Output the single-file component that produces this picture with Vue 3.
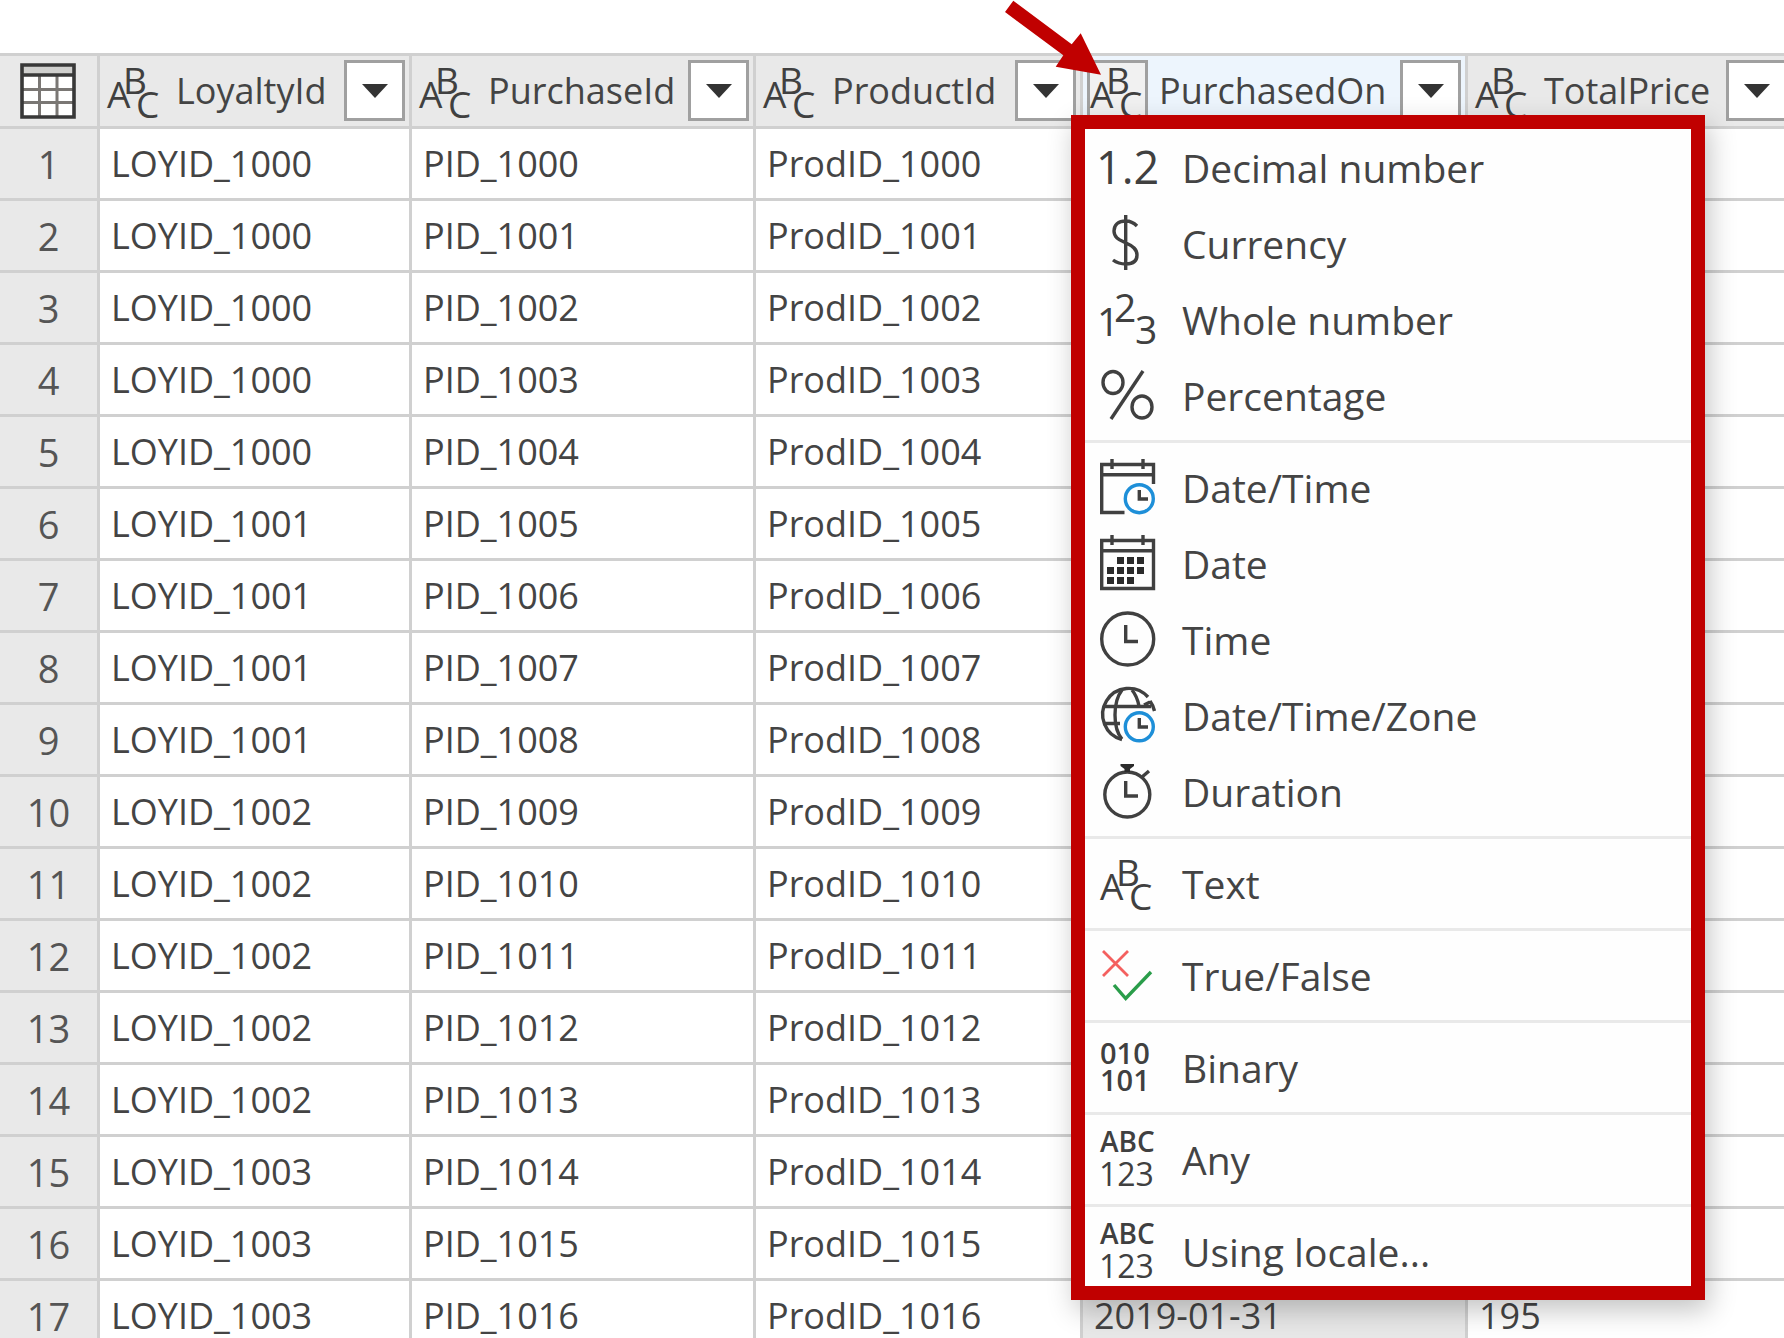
<script setup>
const columns = [
  { key: 'loyalty', label: 'LoyaltyId' },
  { key: 'purchase', label: 'PurchaseId' },
  { key: 'product', label: 'ProductId' },
  { key: 'date', label: 'PurchasedOn', selected: true },
  { key: 'price', label: 'TotalPrice' },
]

const loyaltyIds = [1000, 1000, 1000, 1000, 1000, 1001, 1001, 1001, 1001, 1002, 1002, 1002, 1002, 1002, 1003, 1003, 1003]

const rows = loyaltyIds.map((id, i) => ({
  loyalty: `LOYID_${id}`,
  purchase: `PID_${1000 + i}`,
  product: `ProdID_${1000 + i}`,
  date: i === 16 ? '2019-01-31' : '',
  price: i === 16 ? '195' : '',
}))

const groups = [
  [
    { icon: 'decimal', label: 'Decimal number' },
    { icon: 'currency', label: 'Currency' },
    { icon: 'whole', label: 'Whole number' },
    { icon: 'percent', label: 'Percentage' },
  ],
  [
    { icon: 'datetime', label: 'Date/Time' },
    { icon: 'date', label: 'Date' },
    { icon: 'time', label: 'Time' },
    { icon: 'zone', label: 'Date/Time/Zone' },
    { icon: 'duration', label: 'Duration' },
  ],
  [{ icon: 'text', label: 'Text' }],
  [{ icon: 'bool', label: 'True/False' }],
  [{ icon: 'binary', label: 'Binary' }],
  [{ icon: 'any', label: 'Any' }],
  [{ icon: 'any', label: 'Using locale...' }],
]

const dots = [[20, 25], [30, 25], [40, 25], [10, 35], [20, 35], [30, 35], [40, 35], [10, 45], [20, 45], [30, 45]]
</script>

<template>
  <main class="viewport">
    <table class="grid">
      <colgroup>
        <col class="c-num"><col class="c-loyalty"><col class="c-purchase"><col class="c-product"><col class="c-date"><col>
      </colgroup>
      <thead>
        <tr>
          <th class="corner">
            <button class="plain" aria-label="Table options">
              <svg class="icon" viewBox="0 0 56 56">
                <rect x="2" y="2" width="52" height="52" fill="#fff" />
                <rect x="2" y="2" width="52" height="10" fill="#d0d0ce" />
                <path d="M19.500 12V54M37 12V54M2 26.500H54M2 39.500H54" stroke="#7a7774" stroke-width="3" fill="none" />
                <path d="M2 2H54V54H2ZM2 12H54" stroke="#383838" stroke-width="3.600" fill="none" />
              </svg>
            </button>
          </th>
          <th v-for="c in columns" :key="c.key" :class="{ selected: c.selected }">
            <div class="head">
              <button class="type" :aria-label="'Data type of ' + c.label">
                <svg class="icon" viewBox="0 0 56 56">
                  <text x="0" y="45" font-size="37">A</text>
                  <text x="16" y="31" font-size="37">B</text>
                  <text x="29" y="55" font-size="37">C</text>
                </svg>
              </button>
              <span class="name">{{ c.label }}</span>
              <button class="filter" :aria-label="'Filter ' + c.label">
                <svg width="26" height="14" viewBox="0 0 26 14"><path d="M0 0H26L13 14Z" fill="#333" /></svg>
              </button>
            </div>
            <template v-if="c.selected">
              <div class="menu" role="menu">
                <div v-for="(g, gi) in groups" :key="gi" class="group" role="group">
                  <button v-for="m in g" :key="m.label" class="item" role="menuitem">
                    <svg class="icon" viewBox="0 0 56 56" aria-hidden="true">
                      <text v-if="m.icon === 'decimal'" x="-4" y="45" font-size="45" font-weight="500">1.2</text>
                      <g v-else-if="m.icon === 'currency'" class="line">
                        <path d="M25.700 0V55M37 11C34 8 30 6 26 6C18 6 14 10 14 16C14 23 20 25 26 28C33 31 37 34 37 40C37 46 33 49 26 49C21 49 17 48 13 45" />
                      </g>
                      <g v-else-if="m.icon === 'whole'">
                        <text x="-3" y="45" font-size="39">1</text>
                        <text x="14" y="31" font-size="39">2</text>
                        <text x="35" y="53" font-size="39">3</text>
                      </g>
                      <g v-else-if="m.icon === 'percent'" class="line">
                        <ellipse cx="13" cy="15.500" rx="10" ry="11" />
                        <ellipse cx="42" cy="40" rx="10" ry="11" />
                        <path d="M43 4L11 52" />
                      </g>
                      <g v-else-if="m.icon === 'datetime'" class="line">
                        <path d="M53.500 25V5.500H1.700V53.500H24.500M1.700 15.700H53.500M12 0V10M43 0V10" />
                        <circle class="blue" cx="39.300" cy="39.700" r="14" />
                        <path d="M39.300 31V40H48" />
                      </g>
                      <g v-else-if="m.icon === 'date'" class="line">
                        <path d="M1.700 5.500H53.500V53.500H1.700ZM1.700 15.700H53.500M12 0V10M43 0V10" />
                        <rect v-for="(d, i) in dots" :key="i" class="dot" :x="d[0] - 3" :y="d[1] - 3" width="7" height="7" />
                      </g>
                      <g v-else-if="m.icon === 'time'" class="line">
                        <circle cx="27.700" cy="28" r="26" />
                        <path d="M25.700 14V30.500H38" />
                      </g>
                      <g v-else-if="m.icon === 'zone'" class="line">
                        <path d="M22 52.500A26 26 0 1 1 48 10M50 14Q53 18 54.500 24M44 18L50 15" />
                        <path d="M3 19.500H51M3 36.500H20M22 3Q15 12 15 28T22 52M32 3Q37 9 39 19" />
                        <circle class="blue" cx="39.300" cy="39.800" r="14" />
                        <path d="M39.300 31V40H48" />
                      </g>
                      <g v-else-if="m.icon === 'duration'" class="line">
                        <circle cx="27.300" cy="31.500" r="22.500" />
                        <path d="M25.700 18V33H38M42 14L49 8" />
                        <path class="dot" d="M20.500 1H34V3L30 6V9H24.500V6L20.500 3Z" />
                      </g>
                      <g v-else-if="m.icon === 'text'">
                        <text x="0" y="45" font-size="37">A</text>
                        <text x="16" y="31" font-size="37">B</text>
                        <text x="29" y="55" font-size="37">C</text>
                      </g>
                      <g v-else-if="m.icon === 'bool'" class="line">
                        <path class="red" d="M3 4L28 29M28 4L3 29" />
                        <path class="green" d="M14 38L25.700 51.500L51 25" />
                      </g>
                      <g v-else-if="m.icon === 'binary'" font-weight="600">
                        <text x="0" y="25" font-size="29">010</text>
                        <text x="0" y="52" font-size="29">101</text>
                      </g>
                      <g v-else>
                        <text x="0" y="21" font-size="28" font-weight="600">ABC</text>
                        <text x="-1" y="55" font-size="32">123</text>
                      </g>
                    </svg>
                    <span class="label">{{ m.label }}</span>
                  </button>
                </div>
              </div>
              <svg class="pointer" width="96" height="75" viewBox="0 0 96 75" aria-hidden="true">
                <path d="M8.300 .7L66.700 44.300L75.700 33.300L96 74.700L50.700 66.700L58.300 55.300L0 12Z" fill="#c00000" />
              </svg>
            </template>
          </th>
        </tr>
      </thead>
      <tbody>
        <tr v-for="(r, i) in rows" :key="i">
          <th class="num" scope="row">{{ i + 1 }}</th>
          <td v-for="c in columns" :key="c.key" :class="{ active: c.selected && i === 16 }">{{ r[c.key] }}</td>
        </tr>
      </tbody>
    </table>
  </main>
</template>

<style>
body {
  margin: 0;
  background: #fff;
}
</style>

<style scoped>
.viewport {
  box-sizing: border-box;
  height: 100vh;
  padding-top: 53px;
  overflow: hidden;
  font-family: "Open Sans", "Noto Sans", sans-serif;
  color: #444;
}
.grid {
  width: calc(100% + 10px);
  table-layout: fixed;
  border-collapse: separate;
  border-spacing: 0;
}
.c-num { width: 100px; }
.c-loyalty { width: 312px; }
.c-purchase { width: 344px; }
.c-product { width: 327px; }
.c-date { width: 385px; }
th,
td {
  box-sizing: border-box;
  padding: 0;
  border: 0 solid #d0d0d0;
  border-width: 0 3px 3px 0;
  white-space: nowrap;
}
thead th {
  position: relative;
  border-top-width: 3px;
  background: #e9e9e9;
  font-weight: 500;
}
thead th.selected {
  z-index: 1;
  background: #edf5fd;
}
button {
  box-sizing: border-box;
  padding: 0;
  border: 0;
  background: none;
  font-family: inherit;
  color: inherit;
}
.plain {
  display: block;
  margin: 0 auto 0 20px;
}
.icon {
  display: block;
  flex: none;
  width: 56px;
  height: 56px;
  overflow: visible;
  fill: #404040;
}
.head {
  display: flex;
  align-items: center;
  padding: 4px 4px 5px;
}
.type,
.filter {
  display: flex;
  flex: none;
  align-items: center;
  justify-content: center;
  width: 61px;
  height: 61px;
}
.filter {
  border: 3px solid #a0a0a0;
  background: #fff;
}
.selected .type {
  border: 3px solid #a0a0a0;
  background: #f1f1f1;
}
.name {
  flex: 1;
  padding-left: 11px;
  text-align: left;
  font-size: 36px;
  line-height: 61px;
}
td {
  height: 72px;
  padding-left: 11px;
  font-size: 36px;
  line-height: 69px;
}
td.active {
  background: #e8e8e8;
}
.num {
  padding-top: 1px;
  background: #e9e9e9;
  font-size: 38px;
  font-weight: 400;
  line-height: 68px;
  color: #555;
}
.menu {
  position: absolute;
  top: 59px;
  left: -12px;
  box-sizing: border-box;
  width: 634px;
  border: 14px solid #c00000;
  background: #fefefe;
  box-shadow: 4px 10px 26px rgba(0, 0, 0, 0.24);
  font-weight: 400;
}
.group + .group::before {
  content: "";
  display: block;
  height: 3px;
  margin: 7px 0 6px;
  background: #e9e9e9;
}
.group:last-child {
  margin-bottom: -3px;
}
.item {
  display: flex;
  align-items: center;
  gap: 26px;
  width: 100%;
  height: 76px;
  padding-left: 15px;
}
.label {
  padding-top: 2px;
  font-size: 39px;
  line-height: 72px;
}
.line {
  fill: none;
  stroke: #404040;
  stroke-width: 3.4;
}
.line .dot {
  fill: #2b2b2b;
  stroke: none;
}
.line .blue {
  stroke: #1e8fd8;
  fill: #fff;
}
.line .red {
  stroke: #f4605f;
  stroke-width: 2.8;
}
.line .green {
  stroke: #2a9d4a;
}
.pointer {
  position: absolute;
  top: -56px;
  left: -78px;
}
</style>
